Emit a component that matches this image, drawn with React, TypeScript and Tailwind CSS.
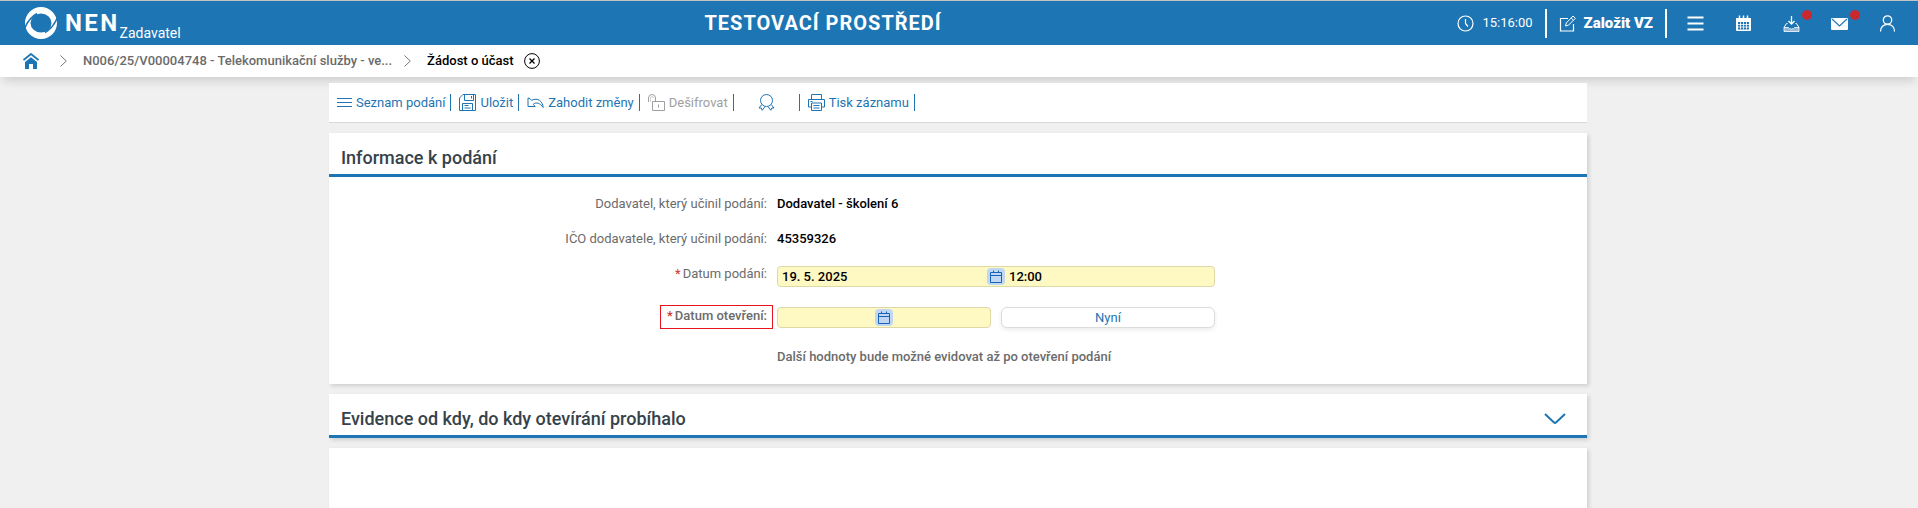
import { ReactNode } from "react";
import clsx from "clsx";

function Logo() {
  return (
    <svg viewBox="0 0 32 32" className="size-8" fill="none" aria-hidden="true">
      <path
        fill="white"
        fillRule="evenodd"
        d="M16 0 A16 16 0 1 1 16 32 A16 16 0 1 1 16 0 Z M16 6.5 A10.5 9.5 0 1 0 16 25.5 A10.5 9.5 0 1 0 16 6.5 Z"
      />
      <path d="M-.5 22 C2 15 6 10 12 6.5" stroke="#1e75b3" strokeWidth="1.5" />
      <path d="M32.5 10 C30 17 26 22 20 25.5" stroke="#1e75b3" strokeWidth="1.5" />
    </svg>
  );
}

function HomeIcon() {
  return (
    <svg viewBox="0 0 16 16" className="size-4" fill="#1e75b3" aria-hidden="true">
      <path d="M8 4.2 L14 9 V16 H10 V11 H6 V16 H2 V9 Z" />
      <path d="M.5 7 L8 1 L15.5 7" fill="none" stroke="#1e75b3" strokeWidth="1.8" />
    </svg>
  );
}

function Chevron() {
  return (
    <svg viewBox="0 0 7 12" className="h-3 w-[7px]" fill="none" stroke="#777" aria-hidden="true">
      <path d="M.5 .5 L6.3 6 L.5 11.5" />
    </svg>
  );
}

function LineIcon({ children }: { children: ReactNode }) {
  return (
    <svg viewBox="0 0 17 17" className="size-[17px] shrink-0" fill="none" stroke="currentColor" aria-hidden="true">
      {children}
    </svg>
  );
}

const icons = {
  clock: (
    <LineIcon>
      <circle cx="8.5" cy="8.5" r="7.5" strokeWidth="1.2" />
      <path d="M8.5 4 V8.5 L11 11.5" strokeWidth="1.2" />
    </LineIcon>
  ),
  edit: (
    <LineIcon>
      <path d="M9 3.5 H1.5 V16 H14.5 V9" strokeWidth="1.2" />
      <path d="M6.5 11 L7.3 8 L14 1 L16.3 3.3 L9.5 10.2 Z M12.2 3 L14.4 5.2" />
    </LineIcon>
  ),
  menu: (
    <LineIcon>
      <path d="M.5 2.5 H16.5 M.5 8.5 H16.5 M.5 14.5 H16.5" strokeWidth="2" />
    </LineIcon>
  ),
  calendarGrid: (
    <LineIcon>
      <path d="M1 3 H16 V15 Q16 16 15 16 H2 Q1 16 1 15 Z" fill="white" stroke="none" />
      <path d="M4.5 .5 V4 M8.5 .5 V4 M12.5 .5 V4" strokeWidth="1.5" />
      <path d="M3 7 H14 V14.5 H3 Z" fill="#1e75b3" stroke="none" />
      <path d="M3 9.5 H14 M3 12 H14 M5.5 7 V14.5 M8.5 7 V14.5 M11.5 7 V14.5" strokeWidth=".8" />
    </LineIcon>
  ),
  download: (
    <LineIcon>
      <path d="M8.5 1 V8.5 M5.5 6 L8.5 9 L11.5 6" strokeWidth="1.3" />
      <path d="M4.5 8.5 H3.5 L1 12.5 M16 12.5 L13.5 8.5 H12.5" />
      <path
        d="M1 12.5 H5.5 Q6 14 8.5 14 Q11 14 11.5 12.5 H16 V16.5 H1 Z"
        fill="white"
        fillOpacity=".5"
        strokeWidth=".8"
      />
    </LineIcon>
  ),
  mail: (
    <LineIcon>
      <rect x="0" y="3" width="17" height="12" rx="1" fill="white" stroke="none" />
      <path d="M1 4 L8.5 11 L16 4" stroke="#1e75b3" strokeWidth="1.1" />
    </LineIcon>
  ),
  user: (
    <LineIcon>
      <circle cx="8.5" cy="5" r="4.2" strokeWidth="1.3" />
      <path d="M1.5 16.5 C1.5 12 4.5 9.3 8.5 9.3 C12.5 9.3 15.5 12 15.5 16.5" strokeWidth="1.3" />
    </LineIcon>
  ),
  list: (
    <svg viewBox="0 0 15 17" className="h-[17px] w-[15px] shrink-0" fill="none" stroke="currentColor" aria-hidden="true">
      <path d="M0 4.5 H15 M0 8.5 H15 M0 12.5 H15" />
    </svg>
  ),
  save: (
    <LineIcon>
      <path d="M.5 4 L4 .5 H16.5 V16.5 H.5 Z M5.5 .5 V6.5 H14.5 V.5 M12.5 2 V4.5" />
      <path d="M3.5 16.5 V9.5 H13.5 V16.5 M5.5 11.5 H9.5 M5.5 14 H11.5" />
    </LineIcon>
  ),
  undo: (
    <LineIcon>
      <path d="M1 4 V12.5 H8.2 L6.2 10.3 C9.5 7.8 13 9 16.2 13.5 C15.5 7 11 3.3 4.6 6.3 L3 4.6 Z" />
    </LineIcon>
  ),
  unlock: (
    <LineIcon>
      <path d="M.5 8 V4 Q.5 .5 4 .5 Q7.5 .5 7.5 4 V7.5 M4.5 7.5 H16.5 V16.5 H4.5 Z M10.5 10.5 V13.5" />
      <path d="M2.5 8 V4 Q2.5 2.5 4 2.5 Q5.5 2.5 5.5 4" strokeWidth=".5" />
    </LineIcon>
  ),
  ribbon: (
    <LineIcon>
      <circle cx="8.5" cy="6.5" r="6" />
      <path d="M3.8 10.5 L1 14 L3.3 14 L4.2 16.3 L7.2 12.4 M13.2 10.5 L16 14 L13.7 14 L12.8 16.3 L9.8 12.4" />
    </LineIcon>
  ),
  print: (
    <LineIcon>
      <path d="M3.5 5 V.5 H13.5 V5 M3.5 13 H.5 V5.5 H16.5 V13 H13.5 M3.5 9 H13.5 V16.5 H3.5 Z" />
      <path d="M5.5 11.5 H11.5 M5.5 14 H11.5 M2.5 7.5 H4.5" />
    </LineIcon>
  ),
};

function HeaderButton({ label, badge, children }: { label: string; badge?: boolean; children: ReactNode }) {
  return (
    <button aria-label={label} className="relative">
      {children}
      {badge ? <span className="absolute -top-[5px] -right-3 size-[10px] rounded-full bg-[#c9292e]" /> : null}
    </button>
  );
}

function ToolButton({ icon, children, disabled }: { icon: ReactNode; children?: ReactNode; disabled?: boolean }) {
  return (
    <div className="flex items-center">
      <button
        disabled={disabled}
        aria-label={children ? undefined : "Podpis"}
        className={clsx(
          "flex h-[17px] items-center gap-1",
          children ? "pr-[5px] pl-2" : "px-6",
          disabled ? "text-[#a0a0a0]" : "text-[#1e75b3]",
        )}
      >
        {icon}
        {children}
      </button>
      <span className="h-[17px] w-px bg-[#1e75b3]" />
    </div>
  );
}

function Panel({ title, action, children }: { title: string; action?: ReactNode; children?: ReactNode }) {
  return (
    <section className="bg-white shadow-[2px_2px_4px_rgba(0,0,0,0.14)]">
      <div className="flex h-11 items-center justify-between border-b-3 border-[#1e75b3] pt-2 pr-[21px] pl-3">
        <h2 className="text-lg font-medium text-[#36424a]">{title}</h2>
        {action}
      </div>
      {children}
    </section>
  );
}

function Row({ children, className }: { children: ReactNode; className?: string }) {
  return <div className={clsx("grid grid-cols-[448fr_438fr_372fr]", className)}>{children}</div>;
}

const labelStyle = "justify-self-end pr-[10px] text-[#6b6b6b]";
const requiredStyle = "mr-[2px] text-[#d0342c]";
const fieldStyle = "flex h-[21px] items-center rounded-[4px] border border-[#ddd8a6] bg-[#fef8c3]";
const inputStyle = "min-w-0 flex-1 bg-transparent pl-1 text-[13px] font-medium text-black outline-none";

function DateButton({ label }: { label: string }) {
  return (
    <button
      aria-label={label}
      className="flex h-[17px] w-[18px] shrink-0 items-center justify-center rounded-[4px] bg-[#bfd7f2]"
    >
      <svg viewBox="0 0 12 13" className="h-[13px] w-3" fill="none" stroke="#1b62b5" aria-hidden="true">
        <path d="M.5 2.5 H11.5 V12.5 H.5 Z M.5 5.5 H11.5 M3.5 .5 V3 M8.5 .5 V3" />
      </svg>
    </button>
  );
}

export default function App() {
  return (
    <div className="flex min-h-screen flex-col bg-[#f0f0f0] font-[Roboto,sans-serif] text-[13px] leading-4">
      <header className="flex h-[45px] items-center justify-between border-t border-[#c4c4c4] bg-[#1e75b3] text-white">
        <a href="#" className="flex items-center pl-[25px]">
          <Logo />
          <span className="ml-2 text-2xl leading-8 font-bold tracking-widest">NEN</span>
          <span className="self-end text-sm leading-3">Zadavatel</span>
        </a>
        <div className="pl-2 text-xl font-bold tracking-wider">TESTOVACÍ PROSTŘEDÍ</div>
        <div className="flex items-center pr-[22px]">
          <span className="flex items-center gap-2">
            {icons.clock}
            15:16:00
          </span>
          <button className="mx-3 flex h-[29px] items-center gap-2 border-x-2 border-white px-3 text-[15px] font-black">
            {icons.edit}
            Založit VZ
          </button>
          <div className="flex items-center gap-[31px] pl-2">
            <HeaderButton label="Menu">{icons.menu}</HeaderButton>
            <HeaderButton label="Kalendář">{icons.calendarGrid}</HeaderButton>
            <HeaderButton label="Stažené soubory" badge>
              {icons.download}
            </HeaderButton>
            <HeaderButton label="Zprávy" badge>
              {icons.mail}
            </HeaderButton>
            <HeaderButton label="Uživatel">{icons.user}</HeaderButton>
          </div>
        </div>
      </header>

      <nav className="flex h-8 items-center bg-white pl-[23px] font-medium shadow-[0_7px_10px_-3px_rgba(0,0,0,0.14)]">
        <a href="#" aria-label="Domů">
          <HomeIcon />
        </a>
        <span className="mr-4 ml-[21px]">
          <Chevron />
        </span>
        <a href="#" className="text-[#6b6b6b]">
          N006/25/V00004748 - Telekomunikační služby - ve...
        </a>
        <span className="mr-4 ml-3">
          <Chevron />
        </span>
        <span className="text-black">Žádost o účast</span>
        <button aria-label="Zavřít" className="ml-[10px]">
          <svg viewBox="0 0 16 16" className="size-4" fill="none" stroke="black" aria-hidden="true">
            <circle cx="8" cy="8" r="7.4" />
            <path d="M5.5 5.5 L10.5 10.5 M10.5 5.5 L5.5 10.5" strokeWidth="1.3" />
          </svg>
        </button>
      </nav>

      <main className="mx-auto mt-[6px] flex w-full max-w-[1260px] flex-1 flex-col gap-[10px] pr-[2px]">
        <div className="flex h-10 items-center border-b border-[#d9d9d9] bg-white">
          <ToolButton icon={icons.list}>Seznam podání</ToolButton>
          <ToolButton icon={icons.save}>Uložit</ToolButton>
          <ToolButton icon={icons.undo}>Zahodit změny</ToolButton>
          <ToolButton icon={icons.unlock} disabled>
            Dešifrovat
          </ToolButton>
          <ToolButton icon={icons.ribbon} />
          <ToolButton icon={icons.print}>Tisk záznamu</ToolButton>
        </div>

        <Panel title="Informace k podání">
          <div className="pt-[19px] pb-[19px]">
            <Row>
              <span className={labelStyle}>Dodavatel, který učinil podání:</span>
              <span className="font-medium">Dodavatel - školení 6</span>
            </Row>
            <Row className="mt-[19px]">
              <span className={labelStyle}>IČO dodavatele, který učinil podání:</span>
              <span className="font-medium">45359326</span>
            </Row>
            <Row className="mt-[19px]">
              <label htmlFor="submitted" className={labelStyle}>
                <span className={requiredStyle}>*</span>Datum podání:
              </label>
              <div className={fieldStyle}>
                <input id="submitted" defaultValue="19. 5. 2025" className={inputStyle} />
                <DateButton label="Vybrat datum podání" />
                <input aria-label="Čas podání" defaultValue="12:00" className={inputStyle} />
              </div>
            </Row>
            <Row className="mt-5">
              <div className="-mt-[2px] mr-1 h-6 justify-self-end border border-[#e8131d] pt-[2px] pr-[5px] pl-[6px]">
                <label htmlFor="opened" className="font-medium text-[#6b6b6b]">
                  <span className={requiredStyle}>*</span>Datum otevření:
                </label>
              </div>
              <div className="grid grid-cols-2 items-start gap-[10px]">
                <div className={fieldStyle}>
                  <input id="opened" className={inputStyle} />
                  <DateButton label="Vybrat datum otevření" />
                  <input aria-label="Čas otevření" className={inputStyle} />
                </div>
                <button className="h-[21px] rounded-md border border-[#dcdcdc] bg-white text-[#1e75b3] shadow-[0_2px_4px_rgba(0,0,0,0.08)]">
                  Nyní
                </button>
              </div>
            </Row>
            <Row className="mt-5">
              <p className="col-start-2 font-medium text-[#6b6b6b]">
                Další hodnoty bude možné evidovat až po otevření podání
              </p>
            </Row>
          </div>
        </Panel>

        <Panel
          title="Evidence od kdy, do kdy otevírání probíhalo"
          action={
            <button aria-label="Rozbalit">
              <svg
                viewBox="0 0 22 12"
                className="h-3 w-[22px]"
                fill="none"
                stroke="#1e75b3"
                strokeWidth="2"
                aria-hidden="true"
              >
                <path d="M1 1 L10 9.5 Q11 10.3 12 9.5 L21 1" />
              </svg>
            </button>
          }
        />

        <section className="flex-1 bg-white shadow-[2px_2px_4px_rgba(0,0,0,0.14)]" />
      </main>
    </div>
  );
}
